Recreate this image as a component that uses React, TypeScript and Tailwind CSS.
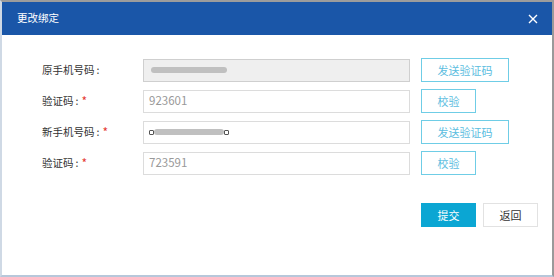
import React from "react";

const font = { fontFamily: '"Noto Sans CJK SC", "Noto Sans", sans-serif' };

function Label({ text, required }: { text: string; required?: boolean }) {
  return (
    <div className="w-[101px] shrink-0 text-[10.5px] text-[#333] leading-none flex items-center">
      <span>{text}</span>
      <span className="ml-[2px]">:</span>
      {required && <span className="text-[#e53935] ml-[3px] text-[12px]">*</span>}
    </div>
  );
}

function BlurBar({ width, handles }: { width: number; handles?: boolean }) {
  return (
    <div className="flex items-center">
      {handles && <div className="w-[5px] h-[5px] border border-[#555] bg-white rounded-[1px]" />}
      <div className="h-[6px] rounded-full bg-[#c0c0c0]" style={{ width }} />
      {handles && <div className="w-[5px] h-[5px] border border-[#555] bg-white rounded-[1px]" />}
    </div>
  );
}

function Row({
  label,
  required,
  children,
  disabled,
  btn,
  btnW,
}: {
  label: string;
  required?: boolean;
  children: React.ReactNode;
  disabled?: boolean;
  btn: string;
  btnW: string;
}) {
  return (
    <div className="flex items-center h-[24px]">
      <Label text={label} required={required} />
      <div
        className={
          "w-[267px] h-[23px] border flex items-center pl-[5px] text-[11.5px] text-[#999] " +
          (disabled ? "bg-[#efefef] border-[#cfcfcf]" : "bg-white border-[#dcdcdc]")
        }
      >
        {children}
      </div>
      <button
        className={
          "ml-[11px] h-[24px] border border-[#6fcde6] bg-white text-[11px] text-[#5bbde0] flex items-center justify-center " +
          btnW
        }
      >
        {btn}
      </button>
    </div>
  );
}

export default function App() {
  return (
    <div
      style={font}
      className="w-[554px] h-[277px] flex flex-col bg-white border-t-2 border-t-[#9c9c9c] border-l-2 border-l-[#cfd9e5] border-r-2 border-r-[#9a9a9a] border-b-2 border-b-[#b7c7da] overflow-hidden"
    >
      <div className="h-[33px] shrink-0 bg-[#1a56a8] flex items-center justify-between pl-[15px] pr-[14px]">
        <span className="text-white text-[10.5px] leading-none">更改绑定</span>
        <svg width="10" height="10" viewBox="0 0 10 10">
          <path d="M1 1 L9 9 M9 1 L1 9" stroke="#ffffff" strokeWidth="1.4" />
        </svg>
      </div>
      <div className="flex flex-col pl-[40px] pt-[23px] gap-[7px]">
        <Row label="原手机号码" disabled btn="发送验证码" btnW="w-[88px]">
          <div className="pl-[2px]">
            <BlurBar width={76} />
          </div>
        </Row>
        <Row label="验证码" required btn="校验" btnW="w-[55px]">
          923601
        </Row>
        <Row label="新手机号码" required btn="发送验证码" btnW="w-[88px]">
          <BlurBar width={70} handles />
        </Row>
        <Row label="验证码" required btn="校验" btnW="w-[55px]">
          723591
        </Row>
      </div>
      <div className="flex pl-[419px] pt-[28px] gap-[7px]">
        <button className="w-[55px] h-[24px] bg-[#0ba6d3] text-white text-[11px] flex items-center justify-center">
          提交
        </button>
        <button className="w-[55px] h-[24px] bg-white border border-[#e2e2e2] text-[#333] text-[11px] flex items-center justify-center">
          返回
        </button>
      </div>
    </div>
  );
}
